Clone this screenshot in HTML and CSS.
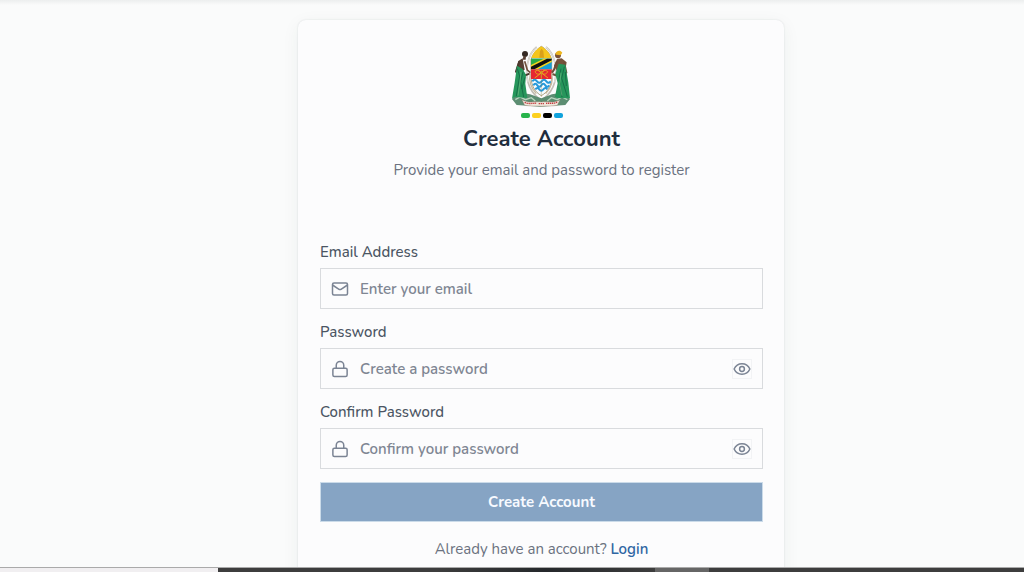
FILE: index.html
```html
<!DOCTYPE html>
<html lang="en">
<head>
<meta charset="utf-8">
<meta name="viewport" content="width=device-width, initial-scale=1">
<title>Create Account</title>
<link rel="stylesheet" href="styles.css">
</head>
<body>
<svg class="sprite" aria-hidden="true">
  <symbol id="mail" viewBox="0 0 24 24"><rect x="2" y="4" width="20" height="16" rx="2"/><path d="M2.500 7l8.200 5.400a2.400 2.400 0 0 0 2.600 0L21.500 7"/></symbol>
  <symbol id="lock" viewBox="0 0 24 24"><rect x="2.500" y="11" width="19" height="11" rx="2"/><path d="M7 11V7a5 5 0 0 1 10 0v4"/></symbol>
  <symbol id="eye" viewBox="0 0 24 24"><path d="M1.500 12C3.500 7.500 7.500 5 12 5s8.500 2.500 10.500 7c-2 4.500-6 7-10.500 7S3.500 16.500 1.500 12z"/><circle cx="12" cy="12" r="3.200"/></symbol>
</svg>
<main class="page">
  <section class="card">
    <header class="intro">
      <svg class="emblem" viewBox="34 26 180 186" role="img" aria-label="Coat of arms">
        <path d="M108 32C82 52 72 100 82 138c6 22 16 36 34 50M136 32c26 20 36 68 26 106-6 22-16 36-34 50" fill="none" stroke="#c2beb6" stroke-width="5"/>
        <path d="M108 32C82 52 72 100 82 138M136 32c26 20 36 68 26 106" fill="none" stroke="#f7f4ed" stroke-width="2"/>
        <path d="M34 188c14-16 34-20 54-14l34 12 32-12c22-6 40-2 54 14l-14 18-74 5-72-5z" fill="#5c8d72"/>
        <path d="M44 190l14-8 16 8 18-6 12 10M200 190l-16-8-14 8-18-6-12 10" fill="none" stroke="#b7d6bf" stroke-width="4"/>
        <path d="M64 190c20 12 38 4 58 7 20-3 38 5 56-7l-8 17c-18 4-32 0-48 3-16-3-32 1-50-3z" fill="#eee7dc" stroke="#9a6b5e" stroke-width="1"/>
        <path d="M72 198c12 6 24 2 36 3M114 202h16M136 201c12-1 24 2 34-4" fill="none" stroke="#c33e42" stroke-width="4" stroke-dasharray="4 2"/>
        <path d="M91 70c6-20 18-32 31-40 14 8 26 20 31 40v48c0 32-13 50-31 60-18-10-31-28-31-60z" fill="#f5fbff" stroke="#867448" stroke-width="2"/>
        <path d="M92 66c6-18 16-28 30-36 14 8 24 18 30 36z" fill="#f4c51c"/>
        <path d="M116 64l2-20 5-7 5 7 2 20z" fill="#d9a01a"/>
        <path d="M91 67h62v32H91z" fill="#159ed7"/><path d="M91 67h56L91 95z" fill="#29ab48"/>
        <path d="M91 99V86l38-19h24v10l-42 22z" fill="#f4d21d"/><path d="M91 99v-8l48-24h14v5l-52 27z" fill="#111"/>
        <path d="M91 99h62v29H91z" fill="#e62732"/>
        <path d="M102 125l31-24M142 125l-31-24M103 106c8-8 14-4 18 4-8 6-14 4-18-4M141 106c-8-8-14-4-18 4 8 6 14 4 18-4M122 103v24" fill="none" stroke="#e9a51e" stroke-width="3"/>
        <path d="M95 135q7-9 14 0t14 0 14 0 13 0M98 147q6-9 12 0t12 0 12 0 12 0M104 159q6-8 12 0t12 0 12 0" fill="none" stroke="#2699da" stroke-width="6"/>
        <path d="M122 100v82" stroke="#927b38" stroke-width="1"/>
        <path d="M66 66l-13 8-7 28 4 28 12-22 10-8z" fill="#594034"/>
        <circle cx="73" cy="53" r="9" fill="#352923"/><path d="M68 60h8l-1 10h-9z" fill="#594034"/>
        <path d="M56 75l-10 31 19 14 22-8" fill="none" stroke="#4c382d" stroke-width="6" stroke-linejoin="round"/>
        <path d="M72 75l8 26 9 8" fill="none" stroke="#70503d" stroke-width="5"/>
        <path d="M49 88l17 10 10 17-2 27 6 43-37-3-9 5 8-48z" fill="#26965b"/>
        <path d="M50 97l7 22-10 60M67 107l-7 29 9 46M73 123l-10 35" fill="none" stroke="#176f48" stroke-width="3"/>
        <path d="M61 106l-3 31-6 41" fill="none" stroke="#73bd84" stroke-width="2"/>
        <path d="M169 68l-9 20 10 18 9-8 14 8 5-28-15-12z" fill="#76523b"/>
        <circle cx="172" cy="57" r="9" fill="#795039"/><path d="M164 53c2-11 15-14 21-4l-5 8-13-2z" fill="#edb51d"/>
        <path d="M190 76l7 33-20 12-22-8M169 75l-9 25-6 9" fill="none" stroke="#6f4d38" stroke-width="6" stroke-linejoin="round"/>
        <path d="M174 82l20 3 9 54 5 47-37-1-8-4 8-40-7-28z" fill="#26965b"/>
        <path d="M191 91l-8 35 17 55M181 97l-6 30 9 55M194 107l3 42" fill="none" stroke="#176f48" stroke-width="3"/>
        <path d="M181 109l-4 34 7 35" fill="none" stroke="#73bd84" stroke-width="2"/>
        <path d="M89 111c-5 22 3 45 18 61M153 111c5 22-3 45-18 61" fill="none" stroke="#c6b99d" stroke-width="4"/>
      </svg>
      <div class="dashes" aria-hidden="true"><span class="green"></span><span class="yellow"></span><span class="black"></span><span class="blue"></span></div>
      <h1 class="title">Create Account</h1>
      <p class="subtitle">Provide your email and password to register</p>
    </header>
    <form class="form">
      <div class="group">
        <label for="email">Email Address</label>
        <div class="field"><svg class="icon"><use href="#mail"/></svg><input id="email" type="email" placeholder="Enter your email"></div>
      </div>
      <div class="group">
        <label for="password">Password</label>
        <div class="field"><svg class="icon"><use href="#lock"/></svg><input id="password" type="password" placeholder="Create a password"><button class="reveal" type="button" aria-label="Show password"><svg class="icon"><use href="#eye"/></svg></button></div>
      </div>
      <div class="group">
        <label for="confirm">Confirm Password</label>
        <div class="field"><svg class="icon"><use href="#lock"/></svg><input id="confirm" type="password" placeholder="Confirm your password"><button class="reveal" type="button" aria-label="Show confirmed password"><svg class="icon"><use href="#eye"/></svg></button></div>
      </div>
      <button class="submit" type="submit">Create Account</button>
    </form>
    <p class="login">Already have an account? <a href="#login">Login</a></p>
  </section>
</main>
<div class="taskbar" aria-hidden="true"><span class="search"></span><span class="apps"></span><span class="active"></span><span class="tray"></span></div>
</body>
</html>
```
FILE: styles.css
```css
* { box-sizing: border-box; }
body {
  margin: 0;
  height: 100vh;
  display: flex;
  flex-direction: column;
  overflow: hidden;
  background: #fafbfb;
  color: #6b7280;
  font: 15px/24px Nunito, Lato, "Noto Sans", sans-serif;
}
h1, p { margin: 0; }
.sprite { display: none; }
.page {
  flex: 1;
  min-height: 0;
  overflow: hidden;
  padding: 20px 22px 0 80px;
  background: linear-gradient(#eceeee, #fafbfb 5px);
}
.card {
  width: 100%;
  max-width: 486px;
  margin: 0 auto;
  padding: 25px 21px 32px 22px;
  border-radius: 8px;
  background: #fcfcfd;
  box-shadow: 0 4px 18px rgb(20 60 50 / 6%), 0 0 2px rgb(20 40 50 / 12%);
}
.intro {
  display: flex;
  flex-direction: column;
  align-items: center;
  text-align: center;
}
.emblem { width: 60px; height: 62px; overflow: visible; }
.dashes { display: flex; gap: 2px; margin: 6px 0; }
.dashes span { width: 9px; height: 5px; border-radius: 2px; }
.green { background: #27b34b; }
.yellow { background: #fcd020; }
.black { background: #000; }
.blue { background: #10a2dc; }
.title {
  color: #1f2d3d;
  font-size: 22px;
  line-height: 30px;
  font-weight: 700;
}
.subtitle { margin-top: 4px; }
.form { display: grid; gap: 11px; margin-top: 58px; }
.group { display: grid; gap: 4px; }
.group label { color: #4b5563; font-weight: 500; }
.field {
  display: flex;
  align-items: center;
  gap: 11px;
  height: 41px;
  padding: 0 10px;
  border: 1px solid #d9dbde;
}
.field:focus-within { border-color: #86a4c4; }
.icon {
  flex: none;
  width: 18px;
  height: 18px;
  fill: none;
  stroke: #7b8494;
  stroke-width: 2;
  stroke-linecap: round;
  stroke-linejoin: round;
}
.field input {
  flex: 1;
  min-width: 0;
  height: 100%;
  padding: 0;
  border: 0;
  outline: 0;
  background: transparent;
  color: #4b5563;
  font: inherit;
  font-weight: 600;
}
.field input::placeholder { color: #7f8693; opacity: 1; }
.reveal {
  display: grid;
  place-items: center;
  width: 20px;
  height: 20px;
  padding: 0;
  border: 1px solid #f2f3f5;
  background: transparent;
}
.submit {
  height: 40px;
  margin-top: 2px;
  padding: 0;
  border: 1px solid #cbdbe9;
  background: #86a4c4;
  color: #f7faff;
  font: inherit;
  font-weight: 700;
}
.login { margin-top: 15px; text-align: center; }
.login a { color: #2f66a3; font-weight: 600; text-decoration: none; }
.taskbar {
  flex: none;
  display: flex;
  height: 4px;
  background: #3d3d3d;
  box-shadow: 0 -1px #aaa;
}
.search { width: 21.3%; background: #f1eff1; }
.apps { width: 42.7%; background: linear-gradient(90deg, #3d3d3d 50%, #25282b 75%, #3d3d3d); }
.active { width: 5.2%; background: #666; }
.tray { flex: 1; }
```
